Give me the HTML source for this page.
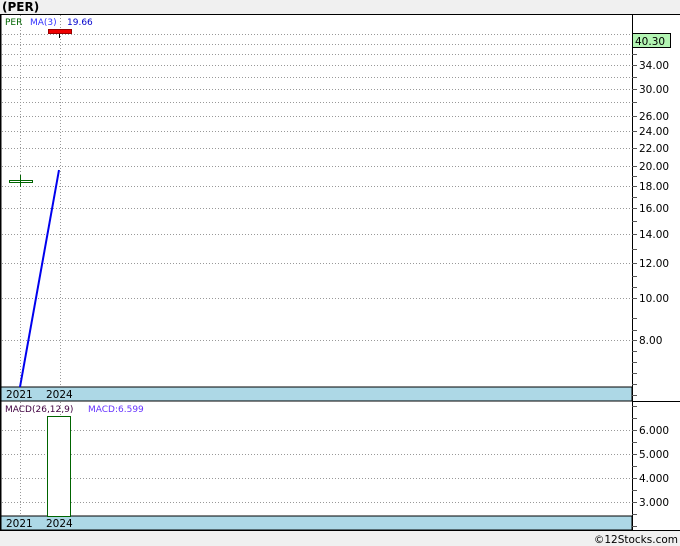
<!DOCTYPE html>
<html><head><style>html,body{margin:0;padding:0;background:#f0f0f0;}svg{display:block}</style></head><body>
<svg width="680" height="546" xmlns="http://www.w3.org/2000/svg" font-family="DejaVu Sans, Liberation Sans, sans-serif">
<rect width="680" height="546" fill="#f0f0f0"/>
<text x="2" y="11" font-size="12" font-weight="bold" fill="#000">(PER)</text>
<rect x="0" y="14" width="680" height="517" fill="#fff"/>
<g stroke="#999" stroke-dasharray="1,2" stroke-width="1">
<line x1="2" x2="632" y1="34.5" y2="34.5"/><line x1="2" x2="632" y1="44.5" y2="44.5"/>
<line x1="2" x2="632" y1="54.5" y2="54.5"/><line x1="2" x2="632" y1="65.5" y2="65.5"/>
<line x1="2" x2="632" y1="77.5" y2="77.5"/><line x1="2" x2="632" y1="89.5" y2="89.5"/>
<line x1="2" x2="632" y1="102.5" y2="102.5"/><line x1="2" x2="632" y1="116.5" y2="116.5"/>
<line x1="2" x2="632" y1="131.5" y2="131.5"/><line x1="2" x2="632" y1="148.5" y2="148.5"/>
<line x1="2" x2="632" y1="166.5" y2="166.5"/><line x1="2" x2="632" y1="186.5" y2="186.5"/>
<line x1="2" x2="632" y1="208.5" y2="208.5"/><line x1="2" x2="632" y1="234.5" y2="234.5"/>
<line x1="2" x2="632" y1="263.5" y2="263.5"/><line x1="2" x2="632" y1="298.5" y2="298.5"/>
<line x1="2" x2="632" y1="340.5" y2="340.5"/>
<line x1="2" x2="632" y1="430.5" y2="430.5"/><line x1="2" x2="632" y1="454.5" y2="454.5"/>
<line x1="2" x2="632" y1="478.5" y2="478.5"/><line x1="2" x2="632" y1="502.5" y2="502.5"/>
<line x1="20.5" x2="20.5" y1="15" y2="530"/><line x1="60.5" x2="60.5" y1="15" y2="530"/>
</g>
<rect x="1" y="387" width="631" height="14" fill="#add8e6" stroke="#000"/>
<rect x="1" y="516" width="631" height="14" fill="#add8e6" stroke="#000"/>
<g font-size="10.5" fill="#000"><text x="6" y="398">2021</text><text x="46" y="398">2024</text>
<text x="6" y="527">2021</text><text x="46" y="527">2024</text></g>
<line x1="0" x2="680" y1="14.5" y2="14.5" stroke="#000"/>
<line x1="0.5" x2="0.5" y1="14" y2="531" stroke="#000" stroke-width="2"/>
<line x1="632.5" x2="632.5" y1="14" y2="531" stroke="#000"/>
<line x1="0" x2="680" y1="530.5" y2="530.5" stroke="#000"/>
<line x1="632" x2="680" y1="401.5" y2="401.5" stroke="#000"/>
<g stroke="#555"><line x1="632" x2="637" y1="54.5" y2="54.5"/><line x1="632" x2="637" y1="65.5" y2="65.5"/><line x1="632" x2="637" y1="77.5" y2="77.5"/><line x1="632" x2="637" y1="89.5" y2="89.5"/><line x1="632" x2="637" y1="102.5" y2="102.5"/><line x1="632" x2="637" y1="116.5" y2="116.5"/><line x1="632" x2="637" y1="131.5" y2="131.5"/><line x1="632" x2="637" y1="148.5" y2="148.5"/><line x1="632" x2="637" y1="166.5" y2="166.5"/><line x1="632" x2="637" y1="176.5" y2="176.5"/><line x1="632" x2="637" y1="186.5" y2="186.5"/><line x1="632" x2="637" y1="197.5" y2="197.5"/><line x1="632" x2="637" y1="208.5" y2="208.5"/><line x1="632" x2="637" y1="221.5" y2="221.5"/><line x1="632" x2="637" y1="234.5" y2="234.5"/><line x1="632" x2="637" y1="249.5" y2="249.5"/><line x1="632" x2="637" y1="263.5" y2="263.5"/><line x1="632" x2="637" y1="276.5" y2="276.5"/><line x1="632" x2="637" y1="287.5" y2="287.5"/><line x1="632" x2="637" y1="298.5" y2="298.5"/><line x1="632" x2="637" y1="318.5" y2="318.5"/><line x1="632" x2="637" y1="330.5" y2="330.5"/><line x1="632" x2="637" y1="340.5" y2="340.5"/><line x1="632" x2="637" y1="351.5" y2="351.5"/><line x1="632" x2="637" y1="362.5" y2="362.5"/><line x1="632" x2="637" y1="373.5" y2="373.5"/><line x1="632" x2="637" y1="384.5" y2="384.5"/><line x1="632" x2="637" y1="395.5" y2="395.5"/>
<line x1="632" x2="637" y1="406.5" y2="406.5"/><line x1="632" x2="637" y1="418.5" y2="418.5"/><line x1="632" x2="637" y1="430.5" y2="430.5"/><line x1="632" x2="637" y1="442.5" y2="442.5"/><line x1="632" x2="637" y1="454.5" y2="454.5"/><line x1="632" x2="637" y1="466.5" y2="466.5"/><line x1="632" x2="637" y1="478.5" y2="478.5"/><line x1="632" x2="637" y1="490.5" y2="490.5"/><line x1="632" x2="637" y1="502.5" y2="502.5"/><line x1="632" x2="637" y1="514.5" y2="514.5"/><line x1="632" x2="637" y1="526.5" y2="526.5"/></g>
<rect x="632.5" y="33.5" width="38" height="14" fill="#b3f5b3" stroke="#000"/>
<g font-size="10.5" fill="#000">
<text x="635" y="45">40.30</text><text x="639" y="69">34.00</text><text x="639" y="93">30.00</text>
<text x="639" y="120">26.00</text><text x="639" y="135">24.00</text><text x="639" y="152">22.00</text>
<text x="639" y="170">20.00</text><text x="639" y="190">18.00</text><text x="639" y="212">16.00</text>
<text x="639" y="238">14.00</text><text x="639" y="267">12.00</text><text x="639" y="302">10.00</text>
<text x="639" y="344">8.00</text>
<text x="639" y="434">6.000</text><text x="639" y="458">5.000</text><text x="639" y="482">4.000</text><text x="639" y="506">3.000</text>
</g>
<text x="5" y="25" font-size="9" fill="#006400">PER</text>
<text x="30" y="25" font-size="9" fill="#3333ff">MA(3)</text>
<text x="67" y="25" font-size="9" fill="#0000cc">19.66</text>
<text x="5" y="412" font-size="9" fill="#400040">MACD(26,12,9)</text>
<text x="88" y="412" font-size="9" fill="#6633ff">MACD:6.599</text>
<rect x="48.5" y="29.5" width="23" height="4" fill="#e00" stroke="#900"/>
<line x1="59.5" x2="59.5" y1="34" y2="38" stroke="#000"/>
<rect x="9.5" y="180.5" width="23" height="2" fill="#fff" stroke="#006400"/>
<line x1="20.5" x2="20.5" y1="175" y2="187" stroke="#006400"/>
<line x1="20" y1="387" x2="59" y2="170" stroke="#0000ee" stroke-width="2"/>
<rect x="47.5" y="416.5" width="23" height="100" fill="#fff" stroke="#006400"/>
<text x="678" y="543" font-size="10.5" fill="#000" text-anchor="end">©12Stocks.com</text>
</svg>
</body></html>
